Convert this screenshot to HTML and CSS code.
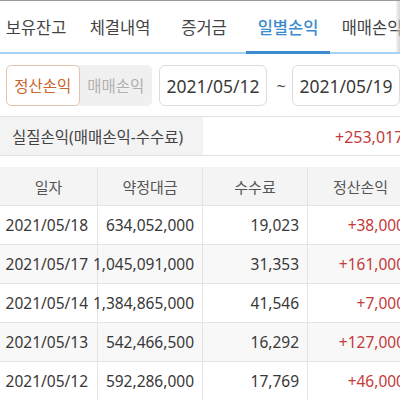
FILE: index.html
```html
<!DOCTYPE html>
<html lang="ko">
<head>
<meta charset="utf-8">
<link rel="stylesheet" href="styles.css">
</head>
<body>
<div class="page">
  <nav class="tabs">
    <div class="tab">보유잔고</div>
    <div class="tab">체결내역</div>
    <div class="tab">증거금</div>
    <div class="tab active">일별손익</div>
    <div class="tab">매매손익</div>
    <div class="fade"></div>
  </nav>

  <div class="controls">
    <div class="seg">
      <div class="seg-item on">정산손익</div>
      <div class="seg-item off">매매손익</div>
    </div>
    <div class="date">2021/05/12</div>
    <div class="tilde">~</div>
    <div class="date">2021/05/19</div>
  </div>

  <div class="summary">
    <div class="sum-label">실질손익(매매손익-수수료)</div>
    <div class="sum-value">+253,017원</div>
  </div>

  <div class="table">
    <div class="th">일자</div>
    <div class="th">약정대금</div>
    <div class="th">수수료</div>
    <div class="th">정산손익</div>

    <div class="td">2021/05/18</div>
    <div class="td">634,052,000</div>
    <div class="td">19,023</div>
    <div class="td red">+38,000</div>

    <div class="td alt">2021/05/17</div>
    <div class="td alt">1,045,091,000</div>
    <div class="td alt">31,353</div>
    <div class="td alt red">+161,000</div>

    <div class="td">2021/05/14</div>
    <div class="td">1,384,865,000</div>
    <div class="td">41,546</div>
    <div class="td red">+7,000</div>

    <div class="td alt">2021/05/13</div>
    <div class="td alt">542,466,500</div>
    <div class="td alt">16,292</div>
    <div class="td alt red">+127,000</div>

    <div class="td">2021/05/12</div>
    <div class="td">592,286,000</div>
    <div class="td">17,769</div>
    <div class="td red">+46,000</div>
  </div>
</div>
</body>
</html>
```

FILE: styles.css
```css
html, body {
  margin: 0;
  padding: 0;
  background: #ffffff;
}

body {
  font-family: "Noto Sans", "Noto Sans CJK KR", sans-serif;
  color: #333333;
  width: 400px;
  height: 400px;
  overflow: hidden;
}

.page {
  width: 400px;
  overflow: hidden;
}

/* tabs */
.tabs {
  position: relative;
  display: flex;
  height: 51px;
  border-top: 1px solid #9a9a9a;
  border-bottom: 2px solid #a8d2f2;
  margin-left: -6px;
  width: 430px;
}

.tab {
  position: relative;
  flex: 0 0 84px;
  display: flex;
  align-items: center;
  justify-content: center;
  font-size: 16.5px;
  color: #444444;
  white-space: nowrap;
}

.tab.active {
  color: #3b8bd0;
  font-weight: 500;
}

.tab.active::after {
  content: "";
  position: absolute;
  left: 0;
  right: 0;
  bottom: -2px;
  height: 3px;
  background: #3b8bd0;
}

.fade {
  position: absolute;
  left: 402px;
  top: 0;
  width: 6px;
  height: 51px;
  background: linear-gradient(to right, rgba(200,200,200,0.2), #c8c8c8);
}

/* controls */
.controls {
  display: flex;
  align-items: center;
  padding: 11px 0 0 6px;
  height: 41px;
}

.seg {
  display: flex;
  height: 41px;
  border-radius: 5px;
  overflow: hidden;
  background: #f0f0f0;
  box-sizing: border-box;
}

.seg-item {
  display: flex;
  align-items: center;
  justify-content: center;
  font-size: 15.5px;
  box-sizing: border-box;
  height: 41px;
}

.seg-item.on {
  width: 74px;
  color: #c8652e;
  background: #ffffff;
  border: 1px solid #e3c4ae;
  border-radius: 5px;
}

.seg-item.off {
  width: 73px;
  color: #b0b0b0;
}

.date {
  box-sizing: border-box;
  flex: 0 0 108px;
  height: 41px;
  border: 1px solid #dcdcdc;
  border-radius: 6px;
  display: flex;
  align-items: center;
  justify-content: center;
  font-size: 17.5px;
  color: #3a3a3a;
  margin-left: 7px;
}

.tilde {
  flex: 0 0 25px;
  text-align: center;
  font-size: 16px;
  color: #555555;
  padding-left: 3px;
  box-sizing: border-box;
  margin-right: -7px;
}

/* summary */
.summary {
  display: flex;
  margin-top: 10px;
  height: 40px;
  box-sizing: border-box;
  border-top: 1px solid #e2e2e2;
  border-bottom: 1px solid #e2e2e2;
  width: 440px;
}

.sum-label {
  flex: 0 0 203px;
  background: #f3f3f3;
  display: flex;
  align-items: center;
  padding-left: 12px;
  box-sizing: border-box;
  font-size: 15.5px;
  color: #444444;
  white-space: nowrap;
}

.sum-value {
  flex: 1;
  display: flex;
  align-items: center;
  padding-left: 132px;
  font-size: 16px;
  color: #c43a3a;
}

/* table */
.table {
  display: grid;
  grid-template-columns: 98px 105px 105px 106px;
  grid-auto-rows: 39px;
  margin-top: 11px;
  width: 414px;
}

.th, .td {
  display: flex;
  align-items: center;
  box-sizing: border-box;
  border-right: 1px solid #e4e4e4;
  border-bottom: 1px solid #e4e4e4;
  white-space: nowrap;
}

.th {
  justify-content: center;
  background: #f4f4f4;
  font-size: 15px;
  color: #555555;
}

.td {
  justify-content: flex-end;
  padding-right: 8px;
  font-size: 15.5px;
  color: #383838;
}

.td:nth-child(4n+1) {
  padding-right: 9px;
}

.td.alt {
  background: #f8f8f8;
}

.td.red {
  color: #c43a3a;
}
```
